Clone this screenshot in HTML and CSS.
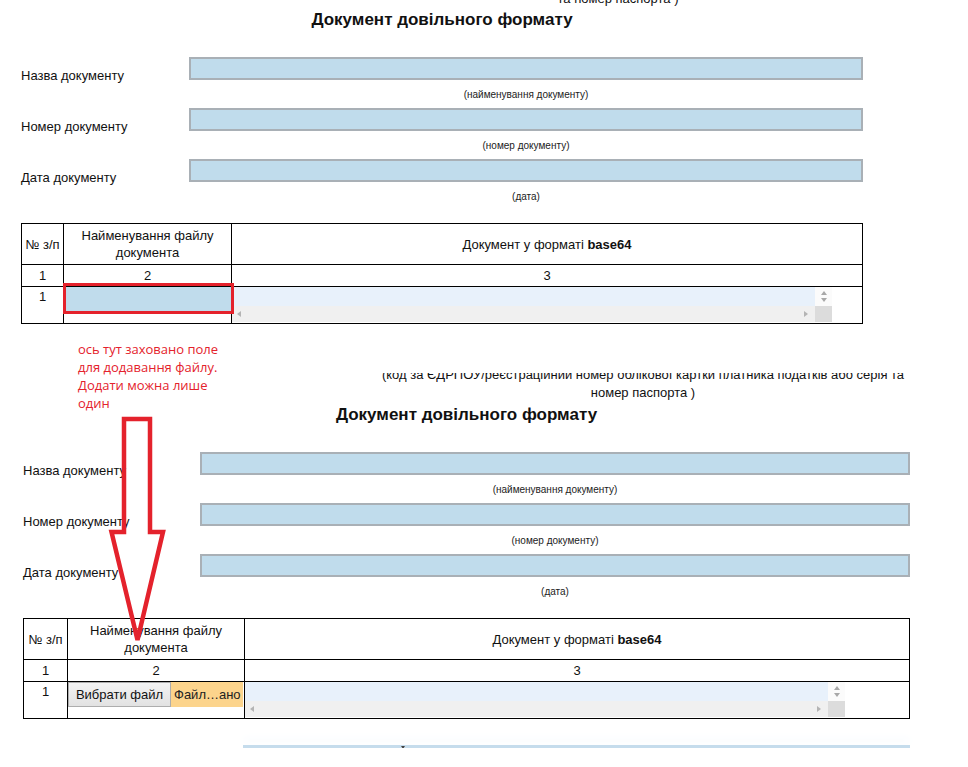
FILE: index.html
```
<!DOCTYPE html>
<html lang="uk">
<head>
    <meta charset="UTF-8">
    <meta name="viewport" content="width=device-width, initial-scale=1.0">
    <title>Документ довільного формату</title>
    <link rel="stylesheet" href="styles.css">
</head>
<body>

    <!-- верхній знімок: поле файлу сховане -->
    <div class="shot shot-one">
        <div class="cut"><p class="payer">та номер паспорта )</p></div>
        <h2 class="doc-title">Документ довільного формату</h2>

        <div class="field">
            <label>Назва документу</label>
            <div class="inp"></div>
            <div class="hint">(найменування документу)</div>
        </div>
        <div class="field">
            <label>Номер документу</label>
            <div class="inp"></div>
            <div class="hint">(номер документу)</div>
        </div>
        <div class="field">
            <label>Дата документу</label>
            <div class="inp"></div>
            <div class="hint">(дата)</div>
        </div>

        <table class="files">
            <colgroup><col class="c-num"><col class="c-name"><col></colgroup>
            <tr class="head">
                <td>№ з/п</td>
                <td>Найменування файлу<br>документа</td>
                <td>Документ у форматі <b>base64</b></td>
            </tr>
            <tr class="nums">
                <td>1</td><td>2</td><td>3</td>
            </tr>
            <tr class="row">
                <td><div class="n">1</div></td>
                <td><div class="file-hidden"></div></td>
                <td>
                    <div class="b64">
                        <div class="b64-text"></div>
                        <div class="b64-vbar"><span class="tri-up"></span><span class="tri-down"></span></div>
                        <div class="b64-hbar"><span class="tri-left"></span><span class="tri-right"></span></div>
                        <div class="b64-corner"></div>
                    </div>
                </td>
            </tr>
        </table>
    </div>

    <!-- нижній знімок: поле файлу видно -->
    <div class="shot shot-two">
        <div class="cut"><p class="payer">(код за ЄДРПОУ/реєстраційний номер облікової картки платника податків або серія та<br>номер паспорта )</p></div>
        <h2 class="doc-title">Документ довільного формату</h2>

        <div class="field">
            <label>Назва документу</label>
            <div class="inp"></div>
            <div class="hint">(найменування документу)</div>
        </div>
        <div class="field">
            <label>Номер документу</label>
            <div class="inp"></div>
            <div class="hint">(номер документу)</div>
        </div>
        <div class="field">
            <label>Дата документу</label>
            <div class="inp"></div>
            <div class="hint">(дата)</div>
        </div>

        <table class="files">
            <colgroup><col class="c-num"><col class="c-name"><col></colgroup>
            <tr class="head">
                <td>№ з/п</td>
                <td>Найменування файлу<br>документа</td>
                <td>Документ у форматі <b>base64</b></td>
            </tr>
            <tr class="nums">
                <td>1</td><td>2</td><td>3</td>
            </tr>
            <tr class="row">
                <td><div class="n">1</div></td>
                <td>
                    <div class="picker">
                        <span class="pick-btn">Вибрати файл</span>
                        <span class="pick-name">Файл…ано</span>
                    </div>
                </td>
                <td>
                    <div class="b64">
                        <div class="b64-text"></div>
                        <div class="b64-vbar"><span class="tri-up"></span><span class="tri-down"></span></div>
                        <div class="b64-hbar"><span class="tri-left"></span><span class="tri-right"></span></div>
                        <div class="b64-corner"></div>
                    </div>
                </td>
            </tr>
        </table>

        <div class="next-inp"></div>
    </div>

    <!-- примітка поверх знімків -->
    <div class="note">ось тут заховано поле<br>для додавання файлу.<br>Додати можна лише<br>один</div>

    <svg class="arrow" width="70" height="245" viewBox="0 0 70 245">
        <polygon points="24,9 50,9 50,122 63,122 37.5,230 11.5,122 24,122" fill="none" stroke="#e4222c" stroke-width="4.5" stroke-linejoin="miter"/>
    </svg>

</body>
</html>
```

FILE: styles.css
```
body {
    margin: 0;
    font-family: "Liberation Sans", Arial, sans-serif;
    font-size: 13px;
    color: #111;
    background: #fff;
    position: relative;
}
.shot-one {
    margin-left: 21px;
    width: 842px;
}
.shot-two {
    margin: 49px 0 0 23px;
    width: 887px;
}
.cut {
    overflow: hidden; /* верх знімка обрізаний */
}
.payer {
    margin: -10px 0 0 352px;
    line-height: 18px;
    text-align: center;
}
.shot-two .payer {
    margin: -7px 0 0 353px;
}
.doc-title {
    margin: 2px 0 27px;
    font-size: 17px;
    line-height: 20px;
    font-weight: bold;
    text-align: center;
}
.shot-two .doc-title {
    margin-top: 3px;
}
.field {
    display: grid;
    grid-template-columns: 168px 1fr;
    margin-bottom: 7px;
}
.shot-two .field {
    grid-template-columns: 177px 1fr;
}
.field label {
    padding-top: 11px;
    line-height: 16px;
}
.inp {
    height: 23px;
    box-sizing: border-box;
    border: 2px solid #a9b0b6;
    background: #c0dcec;
}
.hint {
    grid-column: 2;
    margin-top: 5px;
    font-size: 10px;
    line-height: 12px;
    text-align: center;
    color: #222;
}
.files {
    width: 100%;
    margin-top: 20px;
    border-collapse: collapse;
    table-layout: fixed;
}
.files td {
    border: 1px solid #000;
    padding: 0;
    text-align: center;
    line-height: 17px;
}
.shot-one .c-num { width: 42px; }
.shot-one .c-name { width: 168px; }
.shot-two .c-num { width: 44px; }
.shot-two .c-name { width: 177px; }
.files .head td {
    height: 40px;
}
.files .nums td {
    height: 21px;
    line-height: 16px;
}
.files .row td {
    height: 36px;
    vertical-align: top;
}
.files .n {
    margin-top: 2px;
    line-height: 16px;
}
.file-hidden {
    width: 165px;
    height: 25px;
    margin: -1px 0 0 2px;
    background: #c0dcec;
    outline: 3px solid #e4222c; /* позначка на скріншоті */
}
.picker {
    display: flex;
    height: 25px;
}
.pick-btn {
    width: 103px;
    box-sizing: border-box;
    border: 1px solid #adadad;
    background: linear-gradient(#f3f3f3, #e2e2e2);
    line-height: 23px;
    color: #111;
}
.pick-name {
    width: 72px;
    box-sizing: border-box;
    padding-left: 3px;
    background: #fcd48c;
    line-height: 25px;
    text-align: left;
    white-space: nowrap;
    overflow: hidden;
    color: #222;
}
.b64 {
    display: grid;
    grid-template-columns: 583px 17px;
    grid-template-rows: 19px 16px;
    width: 600px;
}
.b64-text {
    background: #e8f1fb;
}
.b64-vbar {
    display: flex;
    flex-direction: column;
    align-items: center;
    gap: 3px;
    padding-top: 4px;
    background: #fbfbfb;
}
.b64-hbar {
    display: flex;
    justify-content: space-between;
    align-items: center;
    padding: 0 7px 0 5px;
    background: #f0f0f0;
}
.b64-corner {
    background: #dcdcdc;
}
.tri-up, .tri-down, .tri-left, .tri-right {
    width: 0;
    height: 0;
    border: 3px solid transparent;
}
.tri-up { border-top-width: 0; border-bottom: 4px solid #a8a8a8; }
.tri-down { border-bottom-width: 0; border-top: 4px solid #a8a8a8; }
.tri-left { border-left-width: 0; border-right: 4px solid #b4b4b4; }
.tri-right { border-right-width: 0; border-left: 4px solid #b4b4b4; }
.next-inp {
    position: relative;
    height: 3px;
    margin: 26px 0 0 220px;
    background: #c5dcec;
    box-shadow: 0 -6px 8px #f3f8fc;
}
.next-inp::after {
    content: "";
    position: absolute;
    left: 158px;
    top: 1px;
    border-top: 3px solid #444;
    border-left: 2px solid transparent;
    border-right: 2px solid transparent;
}
.note {
    position: absolute;
    left: 78px;
    top: 340px;
    font-family: "Open Sans", "Noto Sans", sans-serif;
    font-size: 13px;
    line-height: 18px;
    color: #e4222c;
}
.arrow {
    position: absolute;
    left: 100px;
    top: 410px;
}
```
